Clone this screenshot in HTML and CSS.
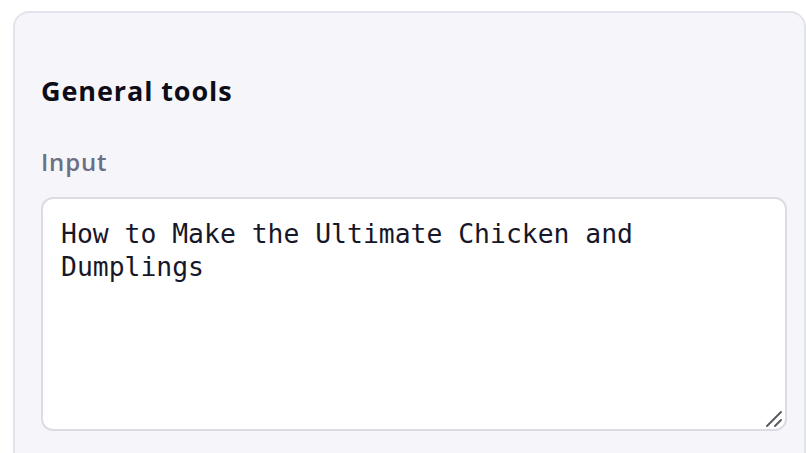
FILE: index.html
```html
<!DOCTYPE html>
<html lang="en">
<head>
<meta charset="utf-8">
<title>General tools</title>
<link rel="stylesheet" href="styles.css">
</head>
<body>
<div class="page">
  <section class="card">
    <h2 class="card-title">General tools</h2>
    <label class="field-label" for="input">Input</label>
    <div class="field-wrap">
      <textarea id="input" class="field-input">How to Make the Ultimate Chicken and Dumplings</textarea>
      <svg class="grip" width="18" height="18" viewBox="0 0 18 18" aria-hidden="true">
        <line x1="2" y1="16" x2="16" y2="2" stroke="#5a5a62" stroke-width="2" stroke-linecap="round"/>
        <line x1="10" y1="16" x2="16" y2="10" stroke="#5a5a62" stroke-width="2" stroke-linecap="round"/>
      </svg>
    </div>
  </section>
</div>
</body>
</html>
```
FILE: styles.css
```css
html, body {
  margin: 0;
  padding: 0;
  background: #ffffff;
  overflow: hidden;
}
.page {
  padding: 11px 0 0 13px;
  width: 806px;
  box-sizing: border-box;
}
.card {
  background: #f6f6fa;
  border: 2px solid #e3e3eb;
  border-radius: 16px;
  padding: 62px 17px 40px 26px;
  width: 793px;
  box-sizing: border-box;
  display: flex;
  flex-direction: column;
  align-items: flex-start;
}
.card-title {
  margin: 0;
  font-family: "Open Sans", "Noto Sans", sans-serif;
  font-weight: 700;
  font-size: 27px;
  letter-spacing: 0.9px;
  line-height: 32px;
  color: #0d0d17;
}
.field-label {
  margin-top: 40px;
  font-family: "Open Sans", "Noto Sans", sans-serif;
  font-weight: 600;
  font-size: 24px;
  letter-spacing: 0.8px;
  line-height: 30px;
  color: #6c6f85;
}
.field-wrap {
  position: relative;
  margin-top: 20px;
  width: 746px;
  height: 234px;
}
.field-input {
  display: block;
  width: 746px;
  height: 234px;
  box-sizing: border-box;
  border: 2px solid #dcdce6;
  border-radius: 12px;
  background: #ffffff;
  padding: 18px 18px;
  font-family: "DejaVu Sans Mono", "Liberation Mono", monospace;
  font-size: 26.4px;
  line-height: 33px;
  color: #17172a;
  resize: none;
  outline: none;
}
.grip {
  position: absolute;
  right: 4px;
  bottom: 3px;
}
```
